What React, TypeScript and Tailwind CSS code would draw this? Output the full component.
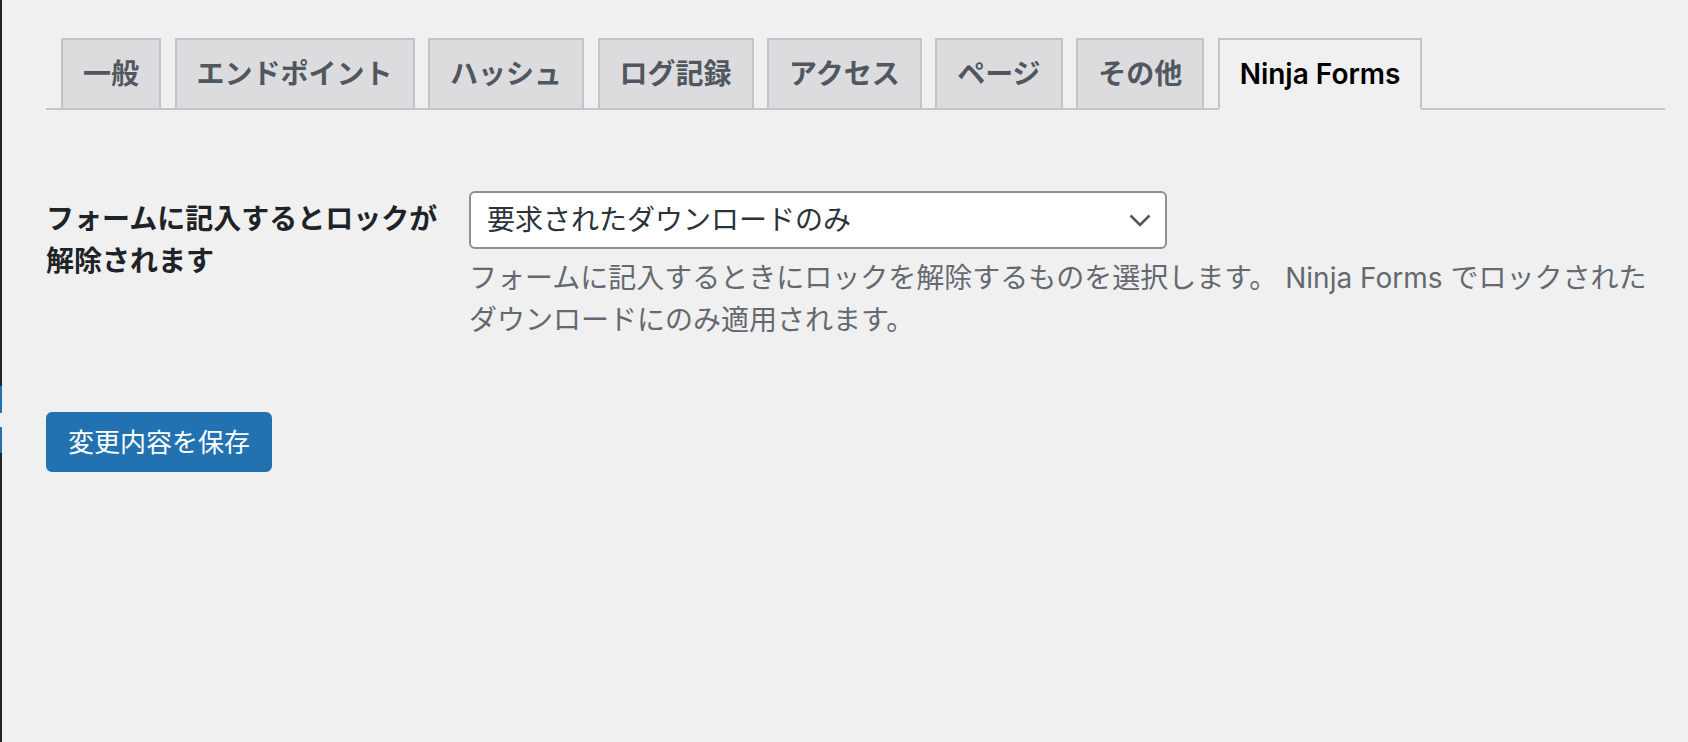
import React from 'react';

const tabs = ['一般', 'エンドポイント', 'ハッシュ', 'ログ記録', 'アクセス', 'ページ', 'その他', 'Ninja Forms'];

const App: React.FC = () => {
  const active = 'Ninja Forms';

  return (
    <div className="flex h-screen w-full bg-[#f0f0f1] font-['Inter','Noto_Sans_CJK_JP',sans-serif]">
      {/* admin menu edge */}
      <div className="flex w-[2px] flex-col">
        <div className="h-[386px] bg-[#1d2327]" />
        <div className="h-[27px] bg-[#2271b1]" />
        <div className="h-[14px] bg-[#f0f0f1]" />
        <div className="h-[26px] bg-[#2271b1]" />
        <div className="flex-1 bg-[#1d2327]" />
      </div>

      <div className="flex-1 pl-[44px] pr-[23px]">
        <nav className="flex gap-[13.5px] border-b-2 border-[#c3c4c7] pl-[15px] pt-[38px]">
          {tabs.map((t) => (
            <a
              key={t}
              className={
                t === active
                  ? '-mb-[2px] border-2 border-[#c3c4c7] border-b-[#f0f0f1] bg-[#f0f0f1] px-[20px] py-[10px] text-[28px] font-semibold leading-[48px] text-black'
                  : '-mb-[2px] border-2 border-[#c3c4c7] bg-[#dcdcde] px-[20px] py-[10px] text-[28px] font-semibold leading-[48px] text-[#50575e]'
              }
            >
              {t}
            </a>
          ))}
        </nav>

        <div className="mt-[81px] flex">
          <div className="mr-[23px] w-[400px] pt-[7px] text-[28px] font-semibold leading-[42px] text-[#1d2327]">
            フォームに記入するとロックが解除されます
          </div>
          <div className="flex-1">
            <div className="flex h-[58px] w-[698px] items-center justify-between rounded-[6px] border-2 border-[#8c8f94] bg-white pl-[16px] pr-[14px] text-[28px] text-[#2c3338]">
              <span>要求されたダウンロードのみ</span>
              <svg width="22" height="13" viewBox="0 0 22 13" fill="none">
                <polyline points="1.5,1.5 11,11 20.5,1.5" stroke="#50575e" strokeWidth="2.6" />
              </svg>
            </div>
            <p className="mt-[8px] text-[28px] leading-[42px] text-[#646970]">
              フォームに記入するときにロックを解除するものを選択します。 Ninja Forms でロックされたダウンロードにのみ適用されます。
            </p>
          </div>
        </div>

        <button className="mt-[71px] h-[60px] rounded-[6px] border-2 border-[#2271b1] bg-[#2271b1] px-[20px] text-[26px] text-white">
          変更内容を保存
        </button>
      </div>
    </div>
  );
};

export default App;
